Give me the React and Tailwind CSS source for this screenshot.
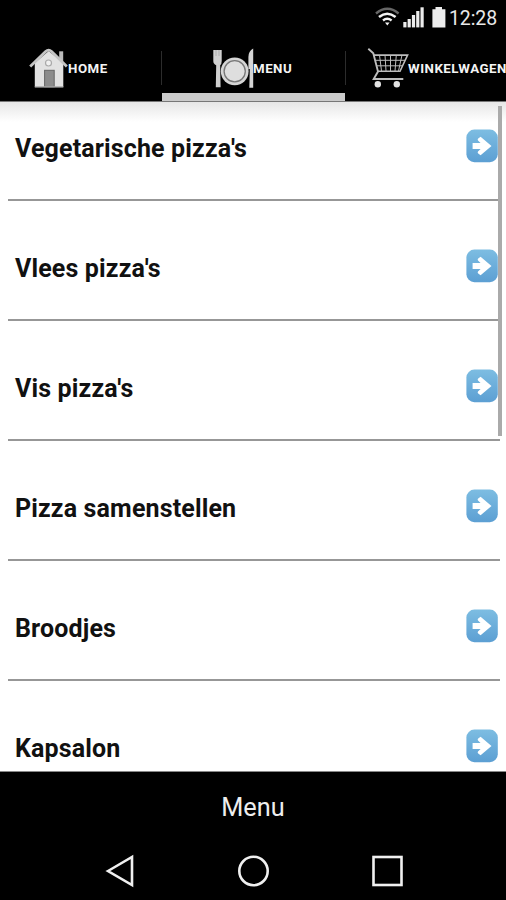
const categories = [
  "Vegetarische pizza's",
  "Vlees pizza's",
  "Vis pizza's",
  'Pizza samenstellen',
  'Broodjes',
  'Kapsalon',
];

const StatusBar = () => (
  <div className="flex h-[37px] shrink-0 items-start justify-end pr-[9px] pt-[6px]">
    <svg width="26" height="22" viewBox="374 6 26 22" fill="none">
      <path d="M376 13.5 Q387.3 4 398.6 13.5" stroke="#666" strokeWidth="2.4" />
      <path d="M379 17 Q387.2 10.5 395.6 17" stroke="#f4f4f4" strokeWidth="2.6" />
      <path d="M383 20.5 Q387.2 17 391.6 20.5" stroke="#f4f4f4" strokeWidth="2.4" />
      <path d="M385 22.5 L389.6 22.5 L387.3 25.5Z" fill="#f4f4f4" />
    </svg>
    <svg className="ml-[3px]" width="21" height="22" viewBox="403 6 21 22" fill="#ececec">
      <rect x="403.3" y="22" width="3.2" height="5.4" />
      <rect x="407.6" y="19" width="3.2" height="8.4" />
      <rect x="411.9" y="15" width="3.2" height="12.4" />
      <rect x="416.2" y="11" width="3.2" height="16.4" />
      <rect x="420.5" y="7.3" width="3.2" height="20.1" />
    </svg>
    <svg className="ml-[8px]" width="14" height="22" viewBox="432 6 14 22" fill="#ececec">
      <path d="M435.5 7h6.5v2.3h3.4v18.3h-13V9.3h3.1z" />
    </svg>
    <span className="ml-[3px] mt-[1px] w-[48px] whitespace-nowrap text-[19.5px] leading-[23px] tracking-[-0.1px] text-[#e8e8e8]">12:28</span>
  </div>
);

const HomeIcon = () => (
  <svg className="shrink-0" width="40" height="42" viewBox="29 47 40 42">
    <rect x="59.2" y="51.3" width="4" height="10" fill="#bbb" />
    <path d="M34.8 63 48.7 51 63.3 63V87.3H34.8z" fill="#e2e2e2" />
    <path d="M30.2 66.6 45.6 51.5Q48.6 48.8 51.6 51.5L66.8 66.6" fill="none" stroke="#c4c4c4" strokeWidth="2.8" />
    <circle cx="48.5" cy="63" r="3" fill="#f0f0f0" stroke="#aaa" strokeWidth="1.2" />
    <rect x="44.6" y="70.3" width="9.6" height="16.6" fill="#8c8c8c" stroke="#666" />
    <path d="M34.8 86.8h28.5" stroke="#aaa" strokeWidth="1.2" />
  </svg>
);

const PlateIcon = () => (
  <svg className="shrink-0" width="42" height="42" viewBox="212 47 42 42">
    <path d="M213.3 50h8.4v11q0 3-1.5 4.2l.4 22.1h-4.8l.4-22.1Q213.3 64 213.3 61z" fill="#d0d0d0" />
    <path d="M216 50v6M219 50v6" stroke="#999" strokeWidth=".6" />
    <circle cx="234.7" cy="71.3" r="13.9" fill="#d5d5d5" />
    <circle cx="234.7" cy="71.3" r="10.6" fill="#dedede" stroke="#777" strokeWidth="1.3" />
    <path d="M253.2 48.6v39.1h-3.9l.5-18.7h-1.4V57q0-5.7 4.8-8.4z" fill="#d5d5d5" />
  </svg>
);

const CartIcon = () => (
  <svg className="shrink-0" width="42" height="42" viewBox="367 47 42 42" fill="none" stroke="#bdbdbd">
    <path d="M368.3 48.8 373.3 53.3 378 71.5 373.7 79H403.3" strokeWidth="1.9" />
    <path d="M374 55.1H407.6L400 71.3H378" strokeWidth="1.6" />
    <path d="M375.5 60.3H405M376.8 65.8H402.5M379.5 55 381.5 71M385 55 386 71M390.5 55V71M396.3 55 395 71M402 55 398.5 71" strokeWidth="1" />
    <circle cx="377.8" cy="84.2" r="3.2" fill="#e4e4e4" stroke="none" />
    <circle cx="396.8" cy="84.2" r="3.2" fill="#e4e4e4" stroke="none" />
  </svg>
);

const ArrowIcon = () => (
  <svg className="shrink-0" width="32" height="34" viewBox="0 0 32 34">
    <defs>
      <linearGradient id="arrowFill" x1="0" y1="0" x2="0" y2="1">
        <stop offset="0" stopColor="#7dbde2" />
        <stop offset="1" stopColor="#5c9fd3" />
      </linearGradient>
    </defs>
    <rect x=".4" y=".6" width="31.4" height="32.6" rx="8" fill="url(#arrowFill)" />
    <path d="M6.6 14H14.6L12 11.4Q11.2 10.4 12.2 9.5L14.6 7.8 25.5 17 14.6 26.2 12.2 24.5Q11.2 23.6 12 22.6L14.6 20H6.6z" fill="#fff" />
  </svg>
);

const TabBar = () => (
  <div className="flex h-[65px] shrink-0 overflow-hidden border-b border-[#777] text-[13.3px] font-bold tracking-[0.5px] text-[#f4f4f4]">
    <div className="flex w-[161px] shrink-0 items-start pl-[29px] pt-[10px]">
      <HomeIcon />
      <span className="-ml-px mt-[11px] leading-[22px]">HOME</span>
    </div>
    <div className="mt-[14px] h-[34px] w-px shrink-0 bg-[#2c2c2c]" />
    <div className="flex h-[65px] w-[183px] shrink-0 flex-col justify-between">
      <div className="flex items-start pl-[50px] pt-[10px]">
        <PlateIcon />
        <span className="-ml-px mt-[11px] leading-[22px]">MENU</span>
      </div>
      <div className="h-[9px] shrink-0 bg-[#cbcbcb]" />
    </div>
    <div className="mt-[14px] h-[34px] w-px shrink-0 bg-[#2c2c2c]" />
    <div className="flex shrink-0 items-start pl-[21px] pt-[10px]">
      <CartIcon />
      <span className="-ml-px mt-[11px] leading-[22px]">WINKELWAGEN</span>
    </div>
  </div>
);

const CategoryRow = ({ name }) => (
  <div className="flex h-[120px] shrink-0 flex-col justify-end">
    <div className="flex h-[102px] items-start justify-between border-b-2 border-[#979797] pl-[7px] pr-[2px]">
      <span className="mt-[35px] text-[25px] font-bold leading-[30px] tracking-[0.14px] text-[#111]">{name}</span>
      <div className="mt-[30px]">
        <ArrowIcon />
      </div>
    </div>
  </div>
);

const App = () => (
  <div className="flex h-[900px] w-[506px] flex-col overflow-hidden bg-black font-['Roboto',sans-serif]">
    <StatusBar />
    <TabBar />
    <div className="relative h-[670px] shrink-0 overflow-hidden border-b border-[#888] bg-white">
      <div className="absolute inset-x-0 top-0 h-[20px] bg-linear-to-b from-[#e6e6e6] to-white" />
      <div className="relative -mt-[21px] flex flex-col pl-[8px] pr-[6px]">
        {categories.map((name) => (
          <CategoryRow key={name} name={name} />
        ))}
      </div>
      {/* scroll thumb */}
      <div className="absolute right-[4px] top-[4px] h-[330px] w-[4px] bg-[#aaa]" />
    </div>
    <div className="flex h-[72px] shrink-0 items-center justify-center text-[25.3px] text-[#eee]">Menu</div>
    <div className="flex flex-1 items-start justify-center">
      <svg className="ml-[2px] mt-[9px]" width="300" height="36" viewBox="104 853 300 36" fill="none" stroke="#f0f0f0" strokeWidth="2.6">
        <path d="M108 871 132 857V885z" />
        <circle cx="253.5" cy="871" r="14.2" />
        <rect x="373.5" y="857" width="28" height="28" />
      </svg>
    </div>
  </div>
);

export default App;
